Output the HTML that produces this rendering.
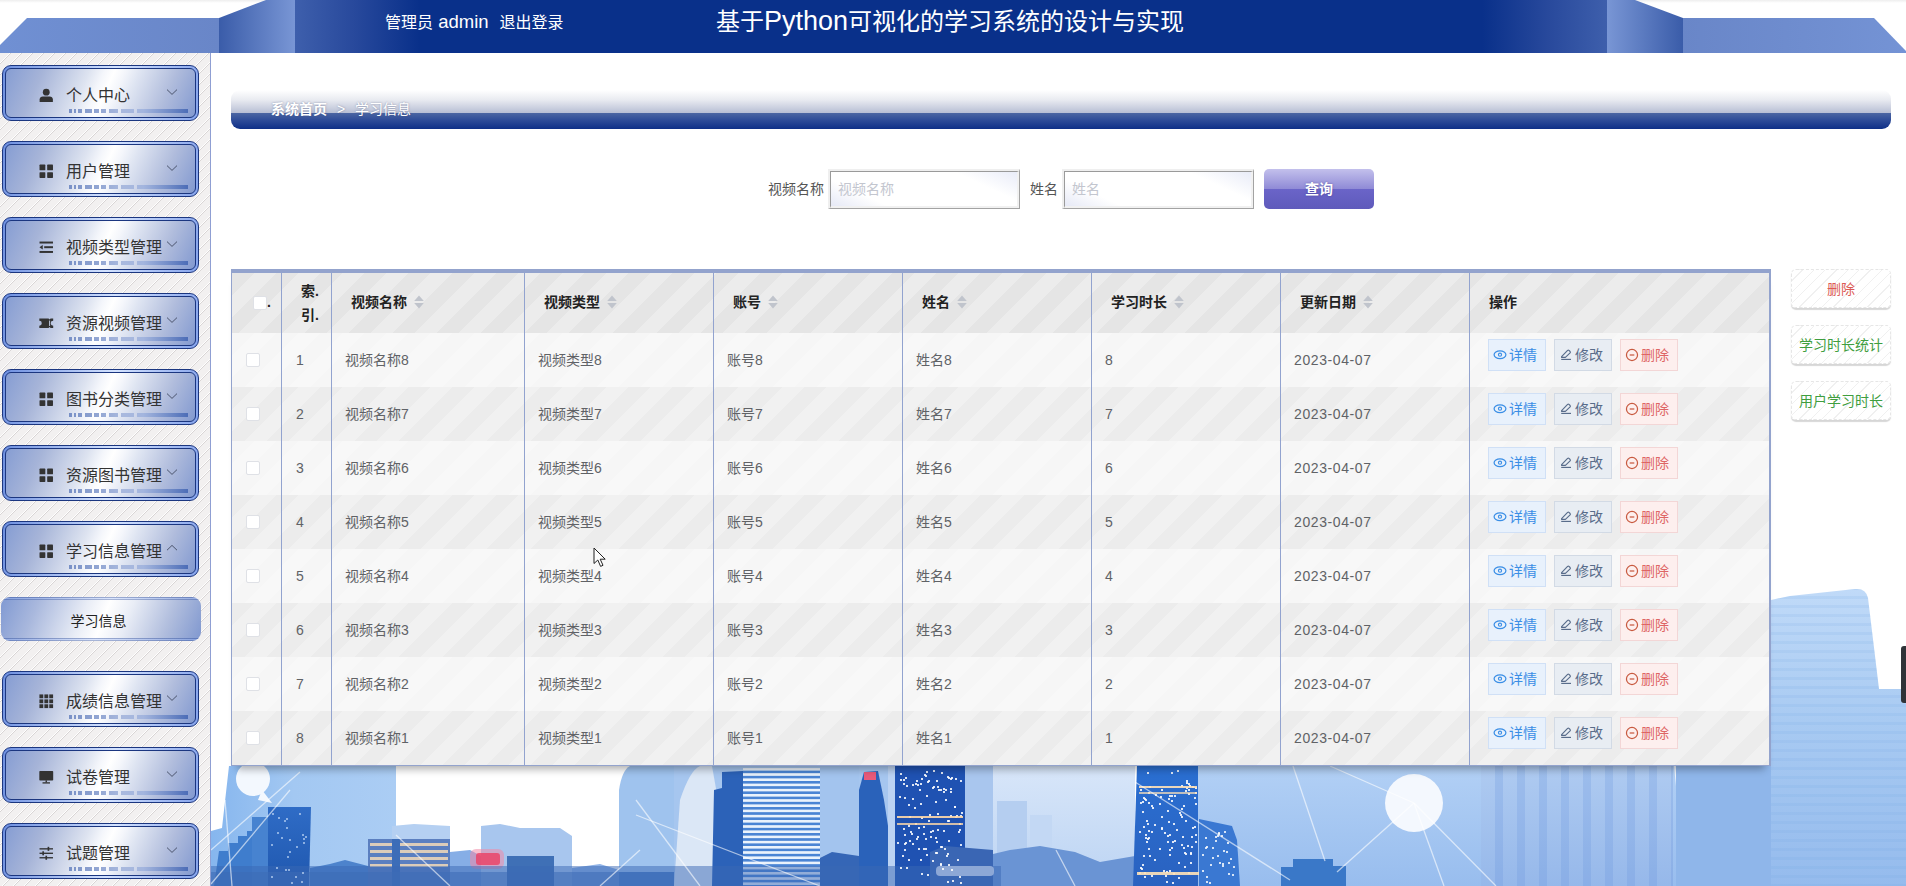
<!DOCTYPE html>
<html lang="zh-CN"><head><meta charset="utf-8"><title>基于Python可视化的学习系统的设计与实现</title>
<style>
*{box-sizing:border-box;margin:0;padding:0}
html,body{width:1906px;height:886px;overflow:hidden;background:#fff}
body:before{content:"";position:absolute;left:0;top:0;width:1906px;height:3px;background:linear-gradient(#eee,#fff)}
body{position:relative;font-family:"Liberation Sans","Noto Sans CJK SC",sans-serif;font-size:14px;color:#333}
.abs{position:absolute}
#hdr{position:absolute;left:0;top:0;width:1906px;height:53px}
#hdr svg{position:absolute;left:0;top:0}
#hdr .user{position:absolute;left:385px;top:9.5px;font-size:16px;line-height:24px;color:#fff;white-space:nowrap}
#hdr .user span{margin-left:11px}
#hdr em{font-style:normal}
#hdr .user em{font-size:18.5px}
#hdr .title em{font-size:27px}
#hdr .title{position:absolute;left:716px;top:3px;font-size:24px;line-height:36px;color:#fff;white-space:nowrap}
#side{position:absolute;left:0;top:53px;width:211px;height:833px;border-right:1px solid #8f9fd3;
 background:repeating-linear-gradient(135deg,#f2f0f0 0,#f2f0f0 6.4px,#fff 6.4px,#fff 7.1px,#d8d4d4 7.1px,#d8d4d4 7.78px)}
.mi{position:absolute;left:2px;width:197px;height:56px;border:1px solid #1b3680;border-radius:9px;padding:2px;
 background:linear-gradient(100deg,#6d8fe0 0%,#d4e3ff 55%,#86a4ec 100%)}
.mi .in{position:relative;width:100%;height:100%;border:1px solid #1b3680;border-radius:6px;
 background:linear-gradient(114deg,#869dd3 0%,#a6b4d8 18%,#dde3f0 40%,#f4f6fb 47%,#ffffff 52%,#f4f6fb 57%,#dfe5f2 64%,#b0bcdc 82%,#8299d0 100%)}
.mi .ic{position:absolute;left:33px;top:19px;width:14.5px;height:14.5px}
.mi .tx{position:absolute;left:60px;top:15px;font-size:16px;line-height:24px;color:#333;white-space:nowrap}
.mi .ar{position:absolute;left:160px;top:17px;width:12px;height:12px}
.mi .ul{position:absolute;left:63px;top:40px;width:120px;height:4px}
.sub{position:absolute;left:1px;top:544px;width:200px;height:44px;border-radius:9px;overflow:hidden;
 background:linear-gradient(112deg,#8099d2 0%,#a9b8dd 18%,#e9edf6 41%,#ffffff 51%,#e9edf6 62%,#b0bddd 82%,#7f97cf 100%);
 text-align:center;font-size:14px;line-height:44px;padding:2px 5px 0 0;color:#222}
.sub:before,.sub:after{content:"";position:absolute;left:0;width:100%;height:3px;
 background:linear-gradient(180deg,rgba(60,90,165,.5) 0,rgba(60,90,165,.5) 1px,rgba(150,180,250,.35) 1px,rgba(150,180,250,.35) 2px,rgba(60,90,165,.45) 2px,rgba(60,90,165,.45) 3px)}
.sub:before{top:0}.sub:after{bottom:0}
#main{position:absolute;left:211px;top:53px;width:1695px;height:833px;overflow:hidden}
#bc{position:absolute;left:231px;top:90px;width:1660px;height:39px;border-radius:9px;
 background:linear-gradient(180deg,#ffffff 0%,#e9ebf1 25%,#b7bed4 59%,#4a64a2 60%,#2d4b98 78%,#0e2f87 100%);
 color:#fff;font-size:14px;line-height:38px;white-space:nowrap;text-shadow:0 0 2px rgba(60,70,110,.55)}
#bc b{position:absolute;left:40px;top:0}
#bc i{position:absolute;left:106px;top:0;font-style:normal}
#bc span{position:absolute;left:124px;top:0}
.lbl{position:absolute;top:169px;height:40px;line-height:40px;font-size:14px;color:#555;white-space:nowrap}
.inp{position:absolute;top:169px;width:192px;height:40px;border-style:solid;border-width:2px 1px 1px 2px;border-color:#efefef #a3a3a3 #a3a3a3 #efefef}
.inp div{width:100%;height:100%;border-style:solid;border-width:1px 2px 2px 1px;border-color:#9a9a9a #f1f1f1 #f1f1f1 #9a9a9a;
 background:linear-gradient(25deg,#e6e9f6 0%,#ffffff 22%,#ffffff 76%,#e9ecf8 100%);
 font-size:14px;line-height:34px;color:#c3c6cf;padding-left:7px}
#qbtn{position:absolute;left:1264px;top:169px;width:110px;height:40px;border-radius:5px;
 background:linear-gradient(180deg,#c3c0ec 0%,#8f8ad6 50%,#6a64c8 51%,#5f5abb 100%);
 color:#fff;font-size:14px;font-weight:bold;text-align:center;line-height:40px;text-shadow:0 0 2px rgba(40,30,110,.5)}
.rb{position:absolute;left:1791px;width:100px;height:39px;border:1px dashed #e6e6e6;border-radius:5px;
 background:repeating-linear-gradient(135deg,#fff 0,#fff 7px,#f0f0f0 7px,#f0f0f0 8px);
 box-shadow:0 2px 1px rgba(0,0,0,.16);text-align:center;font-size:14px;line-height:39px;white-space:nowrap}
#tbl{position:absolute;left:231px;top:269px;width:1540px;height:497px;border-style:solid;border-color:#93a3cd;border-width:4px 2px 1px 1px;
 box-shadow:0 9px 8px -6px rgba(0,0,0,.33);background:#f4f4f4}
.row{position:absolute;left:0;width:1537px;height:54px}
.st{background-image:linear-gradient(-45deg,rgba(255,255,255,.27) 25%,transparent 25%,transparent 50%,rgba(255,255,255,.27) 50%,rgba(255,255,255,.27) 75%,transparent 75%,transparent);background-size:44px 44px}
.hd{top:0;height:60px;background-color:#e5e5e5;font-weight:bold;color:#222}
.r1{background-color:#f6f6f6}
.r2{background-color:#ececec}
.c{position:absolute;top:0;height:100%;white-space:nowrap;font-size:14px;color:#606266}
.row .c{line-height:54px}
.hd .c{line-height:58px;color:#222}
.vl{position:absolute;top:0;width:1px;height:492px;background:#92a3cf}
.cb{position:absolute;width:14px;height:14px;border:1px solid #dfe1e6;border-radius:2px;background:#fff}
.sort{display:inline-block;vertical-align:middle;width:12px;height:16px;margin-left:6px;position:relative;top:-1px}
.btn{position:absolute;top:6px;height:32px;width:58px;border:1px solid;font-size:14px;line-height:30px;white-space:nowrap}
.btn svg{position:absolute;left:4px;top:8px;width:14px;height:14px}
.btn span{position:absolute;left:20px;top:0}
.b1{left:1256px;background:#e8f1fc;border-color:#d0e0f6;color:#3a8ee6}
.b2{left:1322px;background:#e8edf3;border-color:#d2dae5;color:#586c8a}
.b3{left:1388px;background:#fdefee;border-color:#f3d6d6;color:#de6565}
</style></head>
<body>
<svg class="abs" style="left:0;top:0" width="1906" height="886" viewBox="0 0 1906 886">
<defs>
<linearGradient id="cA" x1="0" x2="0" y1="0" y2="1"><stop offset="0" stop-color="#c0daf8"/><stop offset="0.45" stop-color="#a8caf2"/><stop offset="1" stop-color="#95bbed"/></linearGradient>
<linearGradient id="cB" x1="0" x2="0" y1="0" y2="1"><stop offset="0" stop-color="#b2d0f5"/><stop offset="1" stop-color="#98bdee"/></linearGradient>
<linearGradient id="cF" x1="0" x2="0" y1="0" y2="1"><stop offset="0" stop-color="#afcbf1"/><stop offset="1" stop-color="#96b8ea"/></linearGradient>
<linearGradient id="cL" x1="0" x2="1" y1="0" y2="0"><stop offset="0" stop-color="#86b6ee"/><stop offset="0.45" stop-color="#a3c8f2"/><stop offset="1" stop-color="#abcdf4"/></linearGradient>
<linearGradient id="cD" x1="0" x2="0" y1="0" y2="1"><stop offset="0" stop-color="#2f6cc6"/><stop offset="1" stop-color="#1f57ae"/></linearGradient>
<linearGradient id="cE" x1="0" x2="0" y1="0" y2="1"><stop offset="0" stop-color="#2a6fd2"/><stop offset="1" stop-color="#2a62c0"/></linearGradient>
<linearGradient id="cP" x1="0" x2="0" y1="0" y2="1"><stop offset="0" stop-color="#d8e6f9"/><stop offset="1" stop-color="#bcd4f3"/></linearGradient>
<pattern id="pS" x="0" y="768" width="8" height="5.2" patternUnits="userSpaceOnUse"><rect width="8" height="5.2" fill="#4a84d4"/><rect width="8" height="2.6" fill="#eaf2fc"/></pattern>
<pattern id="pH" x="0" y="590" width="8" height="9" patternUnits="userSpaceOnUse"><rect width="8" height="9" fill="none"/><rect y="6" width="8" height="3" fill="#6f9fe0" fill-opacity=".13"/></pattern>
<pattern id="pV" x="1481" y="0" width="22" height="8" patternUnits="userSpaceOnUse"><rect width="22" height="8" fill="none"/><rect x="14" width="8" height="8" fill="#5f8fd8" fill-opacity=".22"/></pattern>
</defs>
<path d="M1771 600L1790 596L1855 589Q1866 588 1868 598L1879 689L1906 689V886H1771Z" fill="url(#cA)"/>
<path d="M1771 600L1790 596L1855 589Q1866 588 1868 598L1879 689L1906 689V886H1771Z" fill="url(#pH)"/>
<rect x="1237" y="766" width="534" height="120" fill="url(#cB)"/>
<rect x="1481" y="766" width="192" height="120" fill="url(#cF)"/>
<rect x="1481" y="766" width="192" height="120" fill="url(#pV)"/>
<path d="M1674 766H1676L1688 886H1686Z" fill="#eef5fd"/>
<rect x="1676" y="766" width="95" height="120" fill="#8fb6ea"/>
<rect x="993" y="766" width="142" height="120" fill="url(#cP)"/>
<rect x="997" y="801" width="30" height="85" fill="#b5cef0"/>
<rect x="1030" y="815" width="22" height="71" fill="#c3d8f4"/>
<path d="M993 886V854L1010 850L1040 846L1075 852L1100 862L1135 856V886Z" fill="#6a94d4"/>
<path d="M1137 766H1198L1199 886H1133Z" fill="url(#cE)"/>
<rect x="1198" y="766" width="42" height="120" fill="url(#cB)"/>
<path d="M1199 819L1232 826L1237 840L1240 886H1199Z" fill="#3a78d2"/>
<circle cx="1414" cy="803" r="29" fill="#f4f8fe"/>
<path d="M1281 867H1293V859H1333V866H1346V886H1281Z" fill="#3a78c8"/>
<path d="M229 766H396V886H211V831L222 828Z" fill="url(#cL)"/>
<circle cx="253" cy="779" r="17" fill="#f3f8fe"/><path d="M262 790L272 803L258 800Z" fill="#f3f8fe"/>
<path d="M268 807H311L309 886H268Z" fill="url(#cD)"/>
<rect x="252" y="817" width="16" height="69" fill="#4783d0"/>
<path d="M219 851H228V843H238V836H247V831H252V886H214Z" fill="#3f7dcd"/>
<path d="M310 868L330 864L345 860L368 866V886H310Z" fill="#4d83cc"/>
<path d="M392 826L414 824L450 826V886H392Z" fill="#b5d0f2"/>
<rect x="368" y="839" width="82" height="47" fill="#5b7fc0"/>
<rect x="370" y="843" width="78" height="3" fill="#f3d9b8" fill-opacity=".85"/>
<rect x="370" y="850" width="78" height="3" fill="#f3d9b8" fill-opacity=".85"/>
<rect x="370" y="857" width="78" height="3" fill="#f3d9b8" fill-opacity=".85"/>
<rect x="370" y="864" width="78" height="3" fill="#f3d9b8" fill-opacity=".85"/>
<rect x="392" y="839" width="8" height="47" fill="#3c6db8"/>
<path d="M450 852L470 850L481 856V886H450Z" fill="#86aee6"/>
<path d="M481 826L500 824L520 828L560 828L572 836V886H481Z" fill="#a8c6ee"/>
<rect x="507" y="856" width="47" height="30" fill="#3f70b6"/>
<rect x="470" y="849" width="34" height="20" rx="6" fill="#f08aa8" fill-opacity=".55"/><rect x="476" y="853" width="24" height="12" rx="3" fill="#ea4468" fill-opacity=".85"/>
<path d="M572 868L600 864L619 870V886H572Z" fill="#8fb2e6"/>
<rect x="211" y="872" width="408" height="14" fill="#3f70b8" fill-opacity=".55"/>
<rect x="630" y="766" width="363" height="120" fill="#a6c6ef"/>
<path d="M619 790Q622 770 630 766H674V886H619Z" fill="#9fc3ee"/>
<rect x="619" y="872" width="55" height="14" fill="#4b7cc4"/>
<path d="M674 886L680 800Q690 770 700 766H712L718 800V886Z" fill="#dbe7f6"/>
<path d="M714 790L722 788V772L743 771V886H712Z" fill="#2c62b8"/>
<rect x="743" y="768" width="77" height="118" fill="url(#pS)"/>
<rect x="820" y="766" width="39" height="120" fill="#a3c4ee"/>
<path d="M820 858L832 852L859 856V886H820Z" fill="#3566b6"/>
<path d="M859 790L864 772L878 771L884 800L888 826V886H859Z" fill="#2a62ba"/>
<rect x="864" y="772" width="12" height="8" fill="#e85a7a"/>
<rect x="888" y="766" width="7" height="120" fill="#bcd3f3"/>
<rect x="895" y="766" width="70" height="120" fill="#1f52b2"/>
<rect x="965" y="766" width="28" height="120" fill="#a9c6ee"/>
<path d="M930 886V852L945 846L993 850V886Z" fill="#3a66b4"/>
<rect x="936" y="866" width="58" height="10" rx="4" fill="#f4f6ff" fill-opacity=".9"/>
<rect x="211" y="866" width="790" height="20" fill="#3a68b4" fill-opacity=".5"/>
<rect x="938" y="789" width="2" height="2" fill="#ffffff" fill-opacity=".85"/>
<rect x="947" y="853" width="2" height="2" fill="#ffffff" fill-opacity=".85"/>
<rect x="903" y="779" width="2" height="2" fill="#ffffff" fill-opacity=".85"/>
<rect x="909" y="816" width="2" height="2" fill="#ffffff" fill-opacity=".85"/>
<rect x="904" y="834" width="2" height="2" fill="#ffffff" fill-opacity=".85"/>
<rect x="924" y="774" width="2" height="2" fill="#ffffff" fill-opacity=".85"/>
<rect x="908" y="825" width="2" height="2" fill="#ffffff" fill-opacity=".85"/>
<rect x="950" y="778" width="2" height="2" fill="#ffffff" fill-opacity=".85"/>
<rect x="927" y="781" width="2" height="2" fill="#ffffff" fill-opacity=".85"/>
<rect x="951" y="777" width="2" height="2" fill="#ffffff" fill-opacity=".85"/>
<rect x="912" y="798" width="2" height="2" fill="#ffffff" fill-opacity=".85"/>
<rect x="904" y="843" width="2" height="2" fill="#ffffff" fill-opacity=".85"/>
<rect x="947" y="776" width="2" height="2" fill="#ffffff" fill-opacity=".85"/>
<rect x="925" y="775" width="2" height="2" fill="#ffffff" fill-opacity=".85"/>
<rect x="914" y="807" width="2" height="2" fill="#ffffff" fill-opacity=".85"/>
<rect x="950" y="788" width="2" height="2" fill="#ffffff" fill-opacity=".85"/>
<rect x="912" y="843" width="2" height="2" fill="#ffffff" fill-opacity=".85"/>
<rect x="936" y="841" width="2" height="2" fill="#ffffff" fill-opacity=".85"/>
<rect x="920" y="783" width="2" height="2" fill="#ffffff" fill-opacity=".85"/>
<rect x="921" y="817" width="2" height="2" fill="#ffffff" fill-opacity=".85"/>
<rect x="909" y="840" width="2" height="2" fill="#ffffff" fill-opacity=".85"/>
<rect x="905" y="842" width="2" height="2" fill="#ffffff" fill-opacity=".85"/>
<rect x="904" y="849" width="2" height="2" fill="#ffffff" fill-opacity=".85"/>
<rect x="923" y="833" width="2" height="2" fill="#ffffff" fill-opacity=".85"/>
<rect x="951" y="869" width="2" height="2" fill="#ffffff" fill-opacity=".85"/>
<rect x="937" y="829" width="2" height="2" fill="#ffffff" fill-opacity=".85"/>
<rect x="955" y="816" width="2" height="2" fill="#ffffff" fill-opacity=".85"/>
<rect x="935" y="801" width="2" height="2" fill="#ffffff" fill-opacity=".85"/>
<rect x="920" y="859" width="2" height="2" fill="#ffffff" fill-opacity=".85"/>
<rect x="928" y="780" width="2" height="2" fill="#ffffff" fill-opacity=".85"/>
<rect x="935" y="837" width="2" height="2" fill="#ffffff" fill-opacity=".85"/>
<rect x="960" y="882" width="2" height="2" fill="#ffffff" fill-opacity=".85"/>
<rect x="940" y="863" width="2" height="2" fill="#ffffff" fill-opacity=".85"/>
<rect x="954" y="806" width="2" height="2" fill="#ffffff" fill-opacity=".85"/>
<rect x="906" y="785" width="2" height="2" fill="#ffffff" fill-opacity=".85"/>
<rect x="950" y="791" width="2" height="2" fill="#ffffff" fill-opacity=".85"/>
<rect x="940" y="789" width="2" height="2" fill="#ffffff" fill-opacity=".85"/>
<rect x="959" y="823" width="2" height="2" fill="#ffffff" fill-opacity=".85"/>
<rect x="902" y="855" width="2" height="2" fill="#ffffff" fill-opacity=".85"/>
<rect x="906" y="867" width="2" height="2" fill="#ffffff" fill-opacity=".85"/>
<rect x="937" y="813" width="2" height="2" fill="#ffffff" fill-opacity=".85"/>
<rect x="941" y="846" width="2" height="2" fill="#ffffff" fill-opacity=".85"/>
<rect x="960" y="844" width="2" height="2" fill="#ffffff" fill-opacity=".85"/>
<rect x="955" y="778" width="2" height="2" fill="#ffffff" fill-opacity=".85"/>
<rect x="908" y="804" width="2" height="2" fill="#ffffff" fill-opacity=".85"/>
<rect x="957" y="859" width="2" height="2" fill="#ffffff" fill-opacity=".85"/>
<rect x="905" y="777" width="2" height="2" fill="#ffffff" fill-opacity=".85"/>
<rect x="936" y="852" width="2" height="2" fill="#ffffff" fill-opacity=".85"/>
<rect x="954" y="806" width="2" height="2" fill="#ffffff" fill-opacity=".85"/>
<rect x="946" y="855" width="2" height="2" fill="#ffffff" fill-opacity=".85"/>
<rect x="941" y="772" width="2" height="2" fill="#ffffff" fill-opacity=".85"/>
<rect x="956" y="815" width="2" height="2" fill="#ffffff" fill-opacity=".85"/>
<rect x="918" y="848" width="2" height="2" fill="#ffffff" fill-opacity=".85"/>
<rect x="911" y="833" width="2" height="2" fill="#ffffff" fill-opacity=".85"/>
<rect x="904" y="797" width="2" height="2" fill="#ffffff" fill-opacity=".85"/>
<rect x="933" y="786" width="2" height="2" fill="#ffffff" fill-opacity=".85"/>
<rect x="928" y="820" width="2" height="2" fill="#ffffff" fill-opacity=".85"/>
<rect x="947" y="881" width="2" height="2" fill="#ffffff" fill-opacity=".85"/>
<rect x="960" y="780" width="2" height="2" fill="#ffffff" fill-opacity=".85"/>
<rect x="918" y="827" width="2" height="2" fill="#ffffff" fill-opacity=".85"/>
<rect x="948" y="840" width="2" height="2" fill="#ffffff" fill-opacity=".85"/>
<rect x="932" y="787" width="2" height="2" fill="#ffffff" fill-opacity=".85"/>
<rect x="952" y="880" width="2" height="2" fill="#ffffff" fill-opacity=".85"/>
<rect x="932" y="860" width="2" height="2" fill="#ffffff" fill-opacity=".85"/>
<rect x="950" y="815" width="2" height="2" fill="#ffffff" fill-opacity=".85"/>
<rect x="945" y="799" width="2" height="2" fill="#ffffff" fill-opacity=".85"/>
<rect x="916" y="780" width="2" height="2" fill="#ffffff" fill-opacity=".85"/>
<rect x="919" y="789" width="2" height="2" fill="#ffffff" fill-opacity=".85"/>
<rect x="926" y="854" width="2" height="2" fill="#ffffff" fill-opacity=".85"/>
<rect x="926" y="771" width="2" height="2" fill="#ffffff" fill-opacity=".85"/>
<rect x="959" y="876" width="2" height="2" fill="#ffffff" fill-opacity=".85"/>
<rect x="920" y="803" width="2" height="2" fill="#ffffff" fill-opacity=".85"/>
<rect x="933" y="770" width="2" height="2" fill="#ffffff" fill-opacity=".85"/>
<rect x="915" y="823" width="2" height="2" fill="#ffffff" fill-opacity=".85"/>
<rect x="944" y="848" width="2" height="2" fill="#ffffff" fill-opacity=".85"/>
<rect x="937" y="786" width="2" height="2" fill="#ffffff" fill-opacity=".85"/>
<rect x="903" y="828" width="2" height="2" fill="#ffffff" fill-opacity=".85"/>
<rect x="947" y="820" width="2" height="2" fill="#ffffff" fill-opacity=".85"/>
<rect x="948" y="820" width="2" height="2" fill="#ffffff" fill-opacity=".85"/>
<rect x="910" y="831" width="2" height="2" fill="#ffffff" fill-opacity=".85"/>
<rect x="948" y="777" width="2" height="2" fill="#ffffff" fill-opacity=".85"/>
<rect x="921" y="778" width="2" height="2" fill="#ffffff" fill-opacity=".85"/>
<rect x="923" y="826" width="2" height="2" fill="#ffffff" fill-opacity=".85"/>
<rect x="917" y="784" width="2" height="2" fill="#ffffff" fill-opacity=".85"/>
<rect x="940" y="846" width="2" height="2" fill="#ffffff" fill-opacity=".85"/>
<rect x="903" y="783" width="2" height="2" fill="#ffffff" fill-opacity=".85"/>
<rect x="897" y="842" width="2" height="2" fill="#ffffff" fill-opacity=".85"/>
<rect x="916" y="838" width="2" height="2" fill="#ffffff" fill-opacity=".85"/>
<rect x="909" y="816" width="2" height="2" fill="#ffffff" fill-opacity=".85"/>
<rect x="900" y="779" width="2" height="2" fill="#ffffff" fill-opacity=".85"/>
<rect x="923" y="848" width="2" height="2" fill="#ffffff" fill-opacity=".85"/>
<rect x="945" y="789" width="2" height="2" fill="#ffffff" fill-opacity=".85"/>
<rect x="929" y="814" width="2" height="2" fill="#ffffff" fill-opacity=".85"/>
<rect x="943" y="830" width="2" height="2" fill="#ffffff" fill-opacity=".85"/>
<rect x="912" y="784" width="2" height="2" fill="#ffffff" fill-opacity=".85"/>
<rect x="959" y="829" width="2" height="2" fill="#ffffff" fill-opacity=".85"/>
<rect x="958" y="831" width="2" height="2" fill="#ffffff" fill-opacity=".85"/>
<rect x="936" y="780" width="2" height="2" fill="#ffffff" fill-opacity=".85"/>
<rect x="915" y="783" width="2" height="2" fill="#ffffff" fill-opacity=".85"/>
<rect x="940" y="864" width="2" height="2" fill="#ffffff" fill-opacity=".85"/>
<rect x="930" y="831" width="2" height="2" fill="#ffffff" fill-opacity=".85"/>
<rect x="917" y="836" width="2" height="2" fill="#ffffff" fill-opacity=".85"/>
<rect x="899" y="796" width="2" height="2" fill="#ffffff" fill-opacity=".85"/>
<rect x="943" y="788" width="2" height="2" fill="#ffffff" fill-opacity=".85"/>
<rect x="900" y="867" width="2" height="2" fill="#ffffff" fill-opacity=".85"/>
<rect x="935" y="852" width="2" height="2" fill="#ffffff" fill-opacity=".85"/>
<rect x="908" y="859" width="2" height="2" fill="#ffffff" fill-opacity=".85"/>
<rect x="930" y="836" width="2" height="2" fill="#ffffff" fill-opacity=".85"/>
<rect x="943" y="791" width="2" height="2" fill="#ffffff" fill-opacity=".85"/>
<rect x="942" y="868" width="2" height="2" fill="#ffffff" fill-opacity=".85"/>
<rect x="925" y="838" width="2" height="2" fill="#ffffff" fill-opacity=".85"/>
<rect x="961" y="812" width="2" height="2" fill="#ffffff" fill-opacity=".85"/>
<rect x="925" y="848" width="2" height="2" fill="#ffffff" fill-opacity=".85"/>
<rect x="921" y="873" width="2" height="2" fill="#ffffff" fill-opacity=".85"/>
<rect x="927" y="874" width="2" height="2" fill="#ffffff" fill-opacity=".85"/>
<rect x="948" y="864" width="2" height="2" fill="#ffffff" fill-opacity=".85"/>
<rect x="926" y="795" width="2" height="2" fill="#ffffff" fill-opacity=".85"/>
<rect x="960" y="815" width="2" height="2" fill="#ffffff" fill-opacity=".85"/>
<rect x="900" y="773" width="2" height="2" fill="#ffffff" fill-opacity=".85"/>
<rect x="932" y="830" width="2" height="2" fill="#ffffff" fill-opacity=".85"/>
<rect x="1155" y="794" width="2" height="2" fill="#ffffff" fill-opacity=".85"/>
<rect x="1183" y="847" width="2" height="2" fill="#ffffff" fill-opacity=".85"/>
<rect x="1161" y="827" width="2" height="2" fill="#ffffff" fill-opacity=".85"/>
<rect x="1190" y="862" width="2" height="2" fill="#ffffff" fill-opacity=".85"/>
<rect x="1161" y="816" width="2" height="2" fill="#ffffff" fill-opacity=".85"/>
<rect x="1144" y="798" width="2" height="2" fill="#ffffff" fill-opacity=".85"/>
<rect x="1145" y="799" width="2" height="2" fill="#ffffff" fill-opacity=".85"/>
<rect x="1169" y="795" width="2" height="2" fill="#ffffff" fill-opacity=".85"/>
<rect x="1160" y="796" width="2" height="2" fill="#ffffff" fill-opacity=".85"/>
<rect x="1169" y="849" width="2" height="2" fill="#ffffff" fill-opacity=".85"/>
<rect x="1178" y="877" width="2" height="2" fill="#ffffff" fill-opacity=".85"/>
<rect x="1139" y="831" width="2" height="2" fill="#ffffff" fill-opacity=".85"/>
<rect x="1180" y="814" width="2" height="2" fill="#ffffff" fill-opacity=".85"/>
<rect x="1190" y="852" width="2" height="2" fill="#ffffff" fill-opacity=".85"/>
<rect x="1144" y="876" width="2" height="2" fill="#ffffff" fill-opacity=".85"/>
<rect x="1181" y="785" width="2" height="2" fill="#ffffff" fill-opacity=".85"/>
<rect x="1163" y="870" width="2" height="2" fill="#ffffff" fill-opacity=".85"/>
<rect x="1184" y="866" width="2" height="2" fill="#ffffff" fill-opacity=".85"/>
<rect x="1151" y="831" width="2" height="2" fill="#ffffff" fill-opacity=".85"/>
<rect x="1195" y="792" width="2" height="2" fill="#ffffff" fill-opacity=".85"/>
<rect x="1166" y="871" width="2" height="2" fill="#ffffff" fill-opacity=".85"/>
<rect x="1179" y="812" width="2" height="2" fill="#ffffff" fill-opacity=".85"/>
<rect x="1144" y="872" width="2" height="2" fill="#ffffff" fill-opacity=".85"/>
<rect x="1185" y="820" width="2" height="2" fill="#ffffff" fill-opacity=".85"/>
<rect x="1168" y="821" width="2" height="2" fill="#ffffff" fill-opacity=".85"/>
<rect x="1186" y="780" width="2" height="2" fill="#ffffff" fill-opacity=".85"/>
<rect x="1185" y="790" width="2" height="2" fill="#ffffff" fill-opacity=".85"/>
<rect x="1149" y="786" width="2" height="2" fill="#ffffff" fill-opacity=".85"/>
<rect x="1140" y="789" width="2" height="2" fill="#ffffff" fill-opacity=".85"/>
<rect x="1176" y="829" width="2" height="2" fill="#ffffff" fill-opacity=".85"/>
<rect x="1190" y="853" width="2" height="2" fill="#ffffff" fill-opacity=".85"/>
<rect x="1148" y="848" width="2" height="2" fill="#ffffff" fill-opacity=".85"/>
<rect x="1191" y="846" width="2" height="2" fill="#ffffff" fill-opacity=".85"/>
<rect x="1169" y="854" width="2" height="2" fill="#ffffff" fill-opacity=".85"/>
<rect x="1161" y="789" width="2" height="2" fill="#ffffff" fill-opacity=".85"/>
<rect x="1174" y="840" width="2" height="2" fill="#ffffff" fill-opacity=".85"/>
<rect x="1147" y="772" width="2" height="2" fill="#ffffff" fill-opacity=".85"/>
<rect x="1139" y="872" width="2" height="2" fill="#ffffff" fill-opacity=".85"/>
<rect x="1185" y="853" width="2" height="2" fill="#ffffff" fill-opacity=".85"/>
<rect x="1145" y="837" width="2" height="2" fill="#ffffff" fill-opacity=".85"/>
<rect x="1186" y="787" width="2" height="2" fill="#ffffff" fill-opacity=".85"/>
<rect x="1166" y="881" width="2" height="2" fill="#ffffff" fill-opacity=".85"/>
<rect x="1151" y="875" width="2" height="2" fill="#ffffff" fill-opacity=".85"/>
<rect x="1194" y="797" width="2" height="2" fill="#ffffff" fill-opacity=".85"/>
<rect x="1140" y="802" width="2" height="2" fill="#ffffff" fill-opacity=".85"/>
<rect x="1152" y="807" width="2" height="2" fill="#ffffff" fill-opacity=".85"/>
<rect x="1171" y="800" width="2" height="2" fill="#ffffff" fill-opacity=".85"/>
<rect x="1187" y="845" width="2" height="2" fill="#ffffff" fill-opacity=".85"/>
<rect x="1159" y="803" width="2" height="2" fill="#ffffff" fill-opacity=".85"/>
<rect x="1173" y="823" width="2" height="2" fill="#ffffff" fill-opacity=".85"/>
<rect x="1192" y="786" width="2" height="2" fill="#ffffff" fill-opacity=".85"/>
<rect x="1142" y="864" width="2" height="2" fill="#ffffff" fill-opacity=".85"/>
<rect x="1161" y="828" width="2" height="2" fill="#ffffff" fill-opacity=".85"/>
<rect x="1181" y="844" width="2" height="2" fill="#ffffff" fill-opacity=".85"/>
<rect x="1191" y="836" width="2" height="2" fill="#ffffff" fill-opacity=".85"/>
<rect x="1165" y="875" width="2" height="2" fill="#ffffff" fill-opacity=".85"/>
<rect x="1195" y="834" width="2" height="2" fill="#ffffff" fill-opacity=".85"/>
<rect x="1147" y="838" width="2" height="2" fill="#ffffff" fill-opacity=".85"/>
<rect x="1148" y="837" width="2" height="2" fill="#ffffff" fill-opacity=".85"/>
<rect x="1171" y="772" width="2" height="2" fill="#ffffff" fill-opacity=".85"/>
<rect x="1194" y="826" width="2" height="2" fill="#ffffff" fill-opacity=".85"/>
<rect x="1188" y="793" width="2" height="2" fill="#ffffff" fill-opacity=".85"/>
<rect x="1177" y="770" width="2" height="2" fill="#ffffff" fill-opacity=".85"/>
<rect x="1188" y="872" width="2" height="2" fill="#ffffff" fill-opacity=".85"/>
<rect x="1148" y="792" width="2" height="2" fill="#ffffff" fill-opacity=".85"/>
<rect x="1148" y="830" width="2" height="2" fill="#ffffff" fill-opacity=".85"/>
<rect x="1178" y="862" width="2" height="2" fill="#ffffff" fill-opacity=".85"/>
<rect x="1146" y="841" width="2" height="2" fill="#ffffff" fill-opacity=".85"/>
<rect x="1142" y="811" width="2" height="2" fill="#ffffff" fill-opacity=".85"/>
<rect x="1182" y="836" width="2" height="2" fill="#ffffff" fill-opacity=".85"/>
<rect x="1172" y="841" width="2" height="2" fill="#ffffff" fill-opacity=".85"/>
<rect x="1169" y="870" width="2" height="2" fill="#ffffff" fill-opacity=".85"/>
<rect x="1188" y="783" width="2" height="2" fill="#ffffff" fill-opacity=".85"/>
<rect x="1195" y="841" width="2" height="2" fill="#ffffff" fill-opacity=".85"/>
<rect x="1142" y="801" width="2" height="2" fill="#ffffff" fill-opacity=".85"/>
<rect x="1151" y="805" width="2" height="2" fill="#ffffff" fill-opacity=".85"/>
<rect x="1141" y="868" width="2" height="2" fill="#ffffff" fill-opacity=".85"/>
<rect x="1145" y="834" width="2" height="2" fill="#ffffff" fill-opacity=".85"/>
<rect x="1167" y="841" width="2" height="2" fill="#ffffff" fill-opacity=".85"/>
<rect x="1140" y="867" width="2" height="2" fill="#ffffff" fill-opacity=".85"/>
<rect x="1143" y="826" width="2" height="2" fill="#ffffff" fill-opacity=".85"/>
<rect x="1159" y="848" width="2" height="2" fill="#ffffff" fill-opacity=".85"/>
<rect x="1171" y="847" width="2" height="2" fill="#ffffff" fill-opacity=".85"/>
<rect x="1171" y="795" width="2" height="2" fill="#ffffff" fill-opacity=".85"/>
<rect x="1183" y="805" width="2" height="2" fill="#ffffff" fill-opacity=".85"/>
<rect x="1167" y="835" width="2" height="2" fill="#ffffff" fill-opacity=".85"/>
<rect x="1173" y="873" width="2" height="2" fill="#ffffff" fill-opacity=".85"/>
<rect x="1169" y="834" width="2" height="2" fill="#ffffff" fill-opacity=".85"/>
<rect x="1154" y="859" width="2" height="2" fill="#ffffff" fill-opacity=".85"/>
<rect x="1172" y="882" width="2" height="2" fill="#ffffff" fill-opacity=".85"/>
<rect x="1195" y="803" width="2" height="2" fill="#ffffff" fill-opacity=".85"/>
<rect x="1174" y="795" width="2" height="2" fill="#ffffff" fill-opacity=".85"/>
<rect x="1192" y="827" width="2" height="2" fill="#ffffff" fill-opacity=".85"/>
<rect x="1147" y="823" width="2" height="2" fill="#ffffff" fill-opacity=".85"/>
<rect x="1146" y="820" width="2" height="2" fill="#ffffff" fill-opacity=".85"/>
<rect x="1167" y="810" width="2" height="2" fill="#ffffff" fill-opacity=".85"/>
<rect x="1143" y="855" width="2" height="2" fill="#ffffff" fill-opacity=".85"/>
<rect x="1154" y="824" width="2" height="2" fill="#ffffff" fill-opacity=".85"/>
<rect x="1143" y="797" width="2" height="2" fill="#ffffff" fill-opacity=".85"/>
<rect x="1181" y="808" width="2" height="2" fill="#ffffff" fill-opacity=".85"/>
<rect x="1189" y="785" width="2" height="2" fill="#ffffff" fill-opacity=".85"/>
<rect x="1188" y="789" width="2" height="2" fill="#ffffff" fill-opacity=".85"/>
<rect x="1184" y="852" width="2" height="2" fill="#ffffff" fill-opacity=".85"/>
<rect x="1181" y="816" width="2" height="2" fill="#ffffff" fill-opacity=".85"/>
<rect x="1148" y="802" width="2" height="2" fill="#ffffff" fill-opacity=".85"/>
<rect x="1195" y="787" width="2" height="2" fill="#ffffff" fill-opacity=".85"/>
<rect x="1168" y="798" width="2" height="2" fill="#ffffff" fill-opacity=".85"/>
<rect x="1186" y="782" width="2" height="2" fill="#ffffff" fill-opacity=".85"/>
<rect x="1164" y="832" width="2" height="2" fill="#ffffff" fill-opacity=".85"/>
<rect x="1149" y="855" width="2" height="2" fill="#ffffff" fill-opacity=".85"/>
<rect x="1215" y="840" width="2" height="2" fill="#ffffff" fill-opacity=".8"/>
<rect x="1228" y="862" width="2" height="2" fill="#ffffff" fill-opacity=".8"/>
<rect x="1226" y="851" width="2" height="2" fill="#ffffff" fill-opacity=".8"/>
<rect x="1227" y="842" width="2" height="2" fill="#ffffff" fill-opacity=".8"/>
<rect x="1223" y="850" width="2" height="2" fill="#ffffff" fill-opacity=".8"/>
<rect x="1206" y="876" width="2" height="2" fill="#ffffff" fill-opacity=".8"/>
<rect x="1224" y="831" width="2" height="2" fill="#ffffff" fill-opacity=".8"/>
<rect x="1222" y="865" width="2" height="2" fill="#ffffff" fill-opacity=".8"/>
<rect x="1230" y="858" width="2" height="2" fill="#ffffff" fill-opacity=".8"/>
<rect x="1202" y="854" width="2" height="2" fill="#ffffff" fill-opacity=".8"/>
<rect x="1222" y="863" width="2" height="2" fill="#ffffff" fill-opacity=".8"/>
<rect x="1219" y="862" width="2" height="2" fill="#ffffff" fill-opacity=".8"/>
<rect x="1205" y="837" width="2" height="2" fill="#ffffff" fill-opacity=".8"/>
<rect x="1215" y="836" width="2" height="2" fill="#ffffff" fill-opacity=".8"/>
<rect x="1206" y="846" width="2" height="2" fill="#ffffff" fill-opacity=".8"/>
<rect x="1218" y="832" width="2" height="2" fill="#ffffff" fill-opacity=".8"/>
<rect x="1212" y="847" width="2" height="2" fill="#ffffff" fill-opacity=".8"/>
<rect x="1209" y="882" width="2" height="2" fill="#ffffff" fill-opacity=".8"/>
<rect x="1228" y="873" width="2" height="2" fill="#ffffff" fill-opacity=".8"/>
<rect x="1217" y="855" width="2" height="2" fill="#ffffff" fill-opacity=".8"/>
<rect x="1210" y="864" width="2" height="2" fill="#ffffff" fill-opacity=".8"/>
<rect x="1233" y="866" width="2" height="2" fill="#ffffff" fill-opacity=".8"/>
<rect x="1232" y="874" width="2" height="2" fill="#ffffff" fill-opacity=".8"/>
<rect x="1221" y="835" width="2" height="2" fill="#ffffff" fill-opacity=".8"/>
<rect x="1218" y="833" width="2" height="2" fill="#ffffff" fill-opacity=".8"/>
<rect x="1212" y="857" width="2" height="2" fill="#ffffff" fill-opacity=".8"/>
<rect x="1205" y="847" width="2" height="2" fill="#ffffff" fill-opacity=".8"/>
<rect x="1202" y="870" width="2" height="2" fill="#ffffff" fill-opacity=".8"/>
<rect x="1206" y="881" width="2" height="2" fill="#ffffff" fill-opacity=".8"/>
<rect x="1217" y="835" width="2" height="2" fill="#ffffff" fill-opacity=".8"/>
<rect x="284" y="820" width="2" height="2" fill="#cfe2fb" fill-opacity=".6"/>
<rect x="286" y="827" width="2" height="2" fill="#cfe2fb" fill-opacity=".6"/>
<rect x="299" y="813" width="2" height="2" fill="#cfe2fb" fill-opacity=".6"/>
<rect x="291" y="882" width="2" height="2" fill="#cfe2fb" fill-opacity=".6"/>
<rect x="296" y="846" width="2" height="2" fill="#cfe2fb" fill-opacity=".6"/>
<rect x="278" y="817" width="2" height="2" fill="#cfe2fb" fill-opacity=".6"/>
<rect x="303" y="842" width="2" height="2" fill="#cfe2fb" fill-opacity=".6"/>
<rect x="277" y="832" width="2" height="2" fill="#cfe2fb" fill-opacity=".6"/>
<rect x="286" y="818" width="2" height="2" fill="#cfe2fb" fill-opacity=".6"/>
<rect x="281" y="837" width="2" height="2" fill="#cfe2fb" fill-opacity=".6"/>
<rect x="289" y="851" width="2" height="2" fill="#cfe2fb" fill-opacity=".6"/>
<rect x="303" y="838" width="2" height="2" fill="#cfe2fb" fill-opacity=".6"/>
<rect x="288" y="869" width="2" height="2" fill="#cfe2fb" fill-opacity=".6"/>
<rect x="302" y="834" width="2" height="2" fill="#cfe2fb" fill-opacity=".6"/>
<rect x="287" y="856" width="2" height="2" fill="#cfe2fb" fill-opacity=".6"/>
<rect x="271" y="844" width="2" height="2" fill="#cfe2fb" fill-opacity=".6"/>
<rect x="272" y="813" width="2" height="2" fill="#cfe2fb" fill-opacity=".6"/>
<rect x="271" y="876" width="2" height="2" fill="#cfe2fb" fill-opacity=".6"/>
<rect x="305" y="836" width="2" height="2" fill="#cfe2fb" fill-opacity=".6"/>
<rect x="302" y="872" width="2" height="2" fill="#cfe2fb" fill-opacity=".6"/>
<rect x="285" y="869" width="2" height="2" fill="#cfe2fb" fill-opacity=".6"/>
<rect x="276" y="867" width="2" height="2" fill="#cfe2fb" fill-opacity=".6"/>
<rect x="301" y="881" width="2" height="2" fill="#cfe2fb" fill-opacity=".6"/>
<rect x="295" y="876" width="2" height="2" fill="#cfe2fb" fill-opacity=".6"/>
<rect x="289" y="839" width="2" height="2" fill="#cfe2fb" fill-opacity=".6"/>
<rect x="897" y="816" width="66" height="2" fill="#ffd9a8" fill-opacity=".9"/><rect x="897" y="823" width="66" height="2" fill="#ffd9a8" fill-opacity=".8"/>
<rect x="1139" y="786" width="58" height="2" fill="#ffe2b8" fill-opacity=".9"/><rect x="1139" y="792" width="58" height="2" fill="#ffe2b8" fill-opacity=".7"/><rect x="1137" y="872" width="62" height="3" fill="#ffe2b8" fill-opacity=".9"/>
<line x1="211" y1="850" x2="300" y2="772" stroke="#fff" stroke-opacity=".6" stroke-width="1.3"/>
<line x1="211" y1="884" x2="290" y2="790" stroke="#fff" stroke-opacity=".6" stroke-width="1.3"/>
<line x1="232" y1="886" x2="225" y2="800" stroke="#fff" stroke-opacity=".6" stroke-width="1.3"/>
<line x1="396" y1="835" x2="450" y2="886" stroke="#fff" stroke-opacity=".6" stroke-width="1.3"/>
<line x1="600" y1="886" x2="640" y2="850" stroke="#fff" stroke-opacity=".6" stroke-width="1.3"/>
<line x1="636" y1="800" x2="700" y2="886" stroke="#fff" stroke-opacity=".6" stroke-width="1.3"/>
<line x1="636" y1="815" x2="820" y2="886" stroke="#fff" stroke-opacity=".6" stroke-width="1.3"/>
<line x1="1135" y1="782" x2="1290" y2="880" stroke="#fff" stroke-opacity=".6" stroke-width="1.3"/>
<line x1="1056" y1="850" x2="1075" y2="886" stroke="#fff" stroke-opacity=".6" stroke-width="1.3"/>
<line x1="1414" y1="803" x2="1337" y2="872" stroke="#fff" stroke-opacity=".6" stroke-width="1.3"/>
<line x1="1414" y1="803" x2="1330" y2="766" stroke="#fff" stroke-opacity=".6" stroke-width="1.3"/>
<line x1="1414" y1="803" x2="1496" y2="886" stroke="#fff" stroke-opacity=".6" stroke-width="1.3"/>
<line x1="1414" y1="803" x2="1444" y2="886" stroke="#fff" stroke-opacity=".6" stroke-width="1.3"/>
<line x1="1293" y1="766" x2="1325" y2="861" stroke="#fff" stroke-opacity=".6" stroke-width="1.3"/>
</svg>
<div id="hdr"><svg width="1906" height="53" viewBox="0 0 1906 53">
<defs>
<linearGradient id="gm" x1="0" x2="1" y1="0" y2="0"><stop offset="0" stop-color="#3e5fac"/><stop offset="0.045" stop-color="#28499c"/><stop offset="0.095" stop-color="#09308a"/><stop offset="0.905" stop-color="#09308a"/><stop offset="0.955" stop-color="#28499c"/><stop offset="1" stop-color="#3e5fac"/></linearGradient>
<linearGradient id="gw" x1="0" x2="1" y1="0" y2="0"><stop offset="0" stop-color="#3a5ca9"/><stop offset="1" stop-color="#7996d5"/></linearGradient>
<linearGradient id="gw2" x1="0" x2="1" y1="0" y2="0"><stop offset="0" stop-color="#7996d5"/><stop offset="1" stop-color="#3a5ca9"/></linearGradient>
<linearGradient id="gl" x1="0" x2="1" y1="0" y2="0"><stop offset="0" stop-color="#7090d3"/><stop offset="1" stop-color="#6986c8"/></linearGradient>
<linearGradient id="gl2" x1="0" x2="1" y1="0" y2="0"><stop offset="0" stop-color="#6986c8"/><stop offset="1" stop-color="#7493d5"/></linearGradient>
</defs>
<polygon points="0,45 27,18 219,18 219,53 0,53" fill="url(#gl)"/>
<polygon points="219,18 266,0 295,0 295,53 219,53" fill="url(#gw)"/>
<rect x="295" y="0" width="1312" height="53" fill="url(#gm)"/>
<polygon points="1607,0 1635,0 1683,18 1683,53 1607,53" fill="url(#gw2)"/>
<polygon points="1683,18 1874,18 1906,51 1906,53 1683,53" fill="url(#gl2)"/>
</svg>
<div class="user">管理员<em> admin</em><span>退出登录</span></div>
<div class="title">基于<em>Python</em>可视化的学习系统的设计与实现</div>
</div>
<div id="side">
<div class="mi" style="top:12px"><div class="in"><svg class="ic" viewBox="0 0 14 14"><circle cx="7" cy="4" r="3.3" fill="#333"/><path d="M0.6 13.6V11.2C0.6 9.3 2 8.3 3.6 8.3H10.4C12 8.3 13.4 9.3 13.4 11.2V13.6Z" fill="#333"/></svg><div class="tx">个人中心</div><svg class="ar" viewBox="0 0 12 12"><path d="M1 3.6L6 8.4L11 3.6" fill="none" stroke="#3a4258" stroke-width=".85"/></svg><svg class="ul" viewBox="0 0 120 4"><defs><linearGradient id="ug" gradientUnits="userSpaceOnUse" x1="0" x2="120" y1="0" y2="0"><stop offset="0" stop-color="#7890c6"/><stop offset="0.45" stop-color="#a9b9de"/><stop offset="0.62" stop-color="#a3b5de"/><stop offset="1" stop-color="#4a6bb6"/></linearGradient></defs><g id="ulb" fill="url(#ug)"><rect x="0" y="0" width="3" height="4"/><rect x="5" y="0" width="2" height="4"/><rect x="9" y="0" width="4" height="4"/><rect x="16" y="0" width="7" height="4"/><rect x="25" y="0" width="5" height="4"/><rect x="32" y="0" width="5" height="4"/><rect x="40" y="0" width="9" height="4"/><rect x="52" y="0" width="13" height="4"/><rect x="68" y="0" width="51" height="4"/></g></svg></div></div>
<div class="mi" style="top:88px"><div class="in"><svg class="ic" viewBox="0 0 14 14"><rect x="0.5" y="0.5" width="5.6" height="5.6" rx=".6" fill="#333"/><rect x="7.9" y="0.5" width="5.6" height="5.6" rx=".6" fill="#333"/><rect x="0.5" y="7.9" width="5.6" height="5.6" rx=".6" fill="#333"/><rect x="7.9" y="7.9" width="5.6" height="5.6" rx=".6" fill="#333"/></svg><div class="tx">用户管理</div><svg class="ar" viewBox="0 0 12 12"><path d="M1 3.6L6 8.4L11 3.6" fill="none" stroke="#3a4258" stroke-width=".85"/></svg><svg class="ul" viewBox="0 0 120 4"><use href="#ulb"/></svg></div></div>
<div class="mi" style="top:164px"><div class="in"><svg class="ic" viewBox="0 0 14 14"><rect x="0.5" y="1.5" width="13" height="1.9" fill="#333"/><rect x="5" y="6" width="8.5" height="1.9" fill="#333"/><rect x="0.5" y="10.6" width="13" height="1.9" fill="#333"/><path d="M0.4 7L3.6 4.8V9.2Z" fill="#333"/></svg><div class="tx">视频类型管理</div><svg class="ar" viewBox="0 0 12 12"><path d="M1 3.6L6 8.4L11 3.6" fill="none" stroke="#3a4258" stroke-width=".85"/></svg><svg class="ul" viewBox="0 0 120 4"><use href="#ulb"/></svg></div></div>
<div class="mi" style="top:240px"><div class="in"><svg class="ic" viewBox="0 0 14 14"><path d="M0.3 2.3H9.2L10.2 3.4L11.2 2.3H13.7V4.6A2.4 2.4 0 0 0 13.7 9.4V11.7H11.2L10.2 10.6L9.2 11.7H0.3V9.4A2.4 2.4 0 0 0 0.3 4.6Z" fill="#333"/><rect x="9.8" y="4.4" width=".9" height="5.2" fill="#c9d3ea"/></svg><div class="tx">资源视频管理</div><svg class="ar" viewBox="0 0 12 12"><path d="M1 3.6L6 8.4L11 3.6" fill="none" stroke="#3a4258" stroke-width=".85"/></svg><svg class="ul" viewBox="0 0 120 4"><use href="#ulb"/></svg></div></div>
<div class="mi" style="top:316px"><div class="in"><svg class="ic" viewBox="0 0 14 14"><rect x="0.5" y="0.5" width="5.6" height="5.6" rx=".6" fill="#333"/><rect x="7.9" y="0.5" width="5.6" height="5.6" rx=".6" fill="#333"/><rect x="0.5" y="7.9" width="5.6" height="5.6" rx=".6" fill="#333"/><rect x="7.9" y="7.9" width="5.6" height="5.6" rx=".6" fill="#333"/></svg><div class="tx">图书分类管理</div><svg class="ar" viewBox="0 0 12 12"><path d="M1 3.6L6 8.4L11 3.6" fill="none" stroke="#3a4258" stroke-width=".85"/></svg><svg class="ul" viewBox="0 0 120 4"><use href="#ulb"/></svg></div></div>
<div class="mi" style="top:392px"><div class="in"><svg class="ic" viewBox="0 0 14 14"><rect x="0.5" y="0.5" width="5.6" height="5.6" rx=".6" fill="#333"/><rect x="7.9" y="0.5" width="5.6" height="5.6" rx=".6" fill="#333"/><rect x="0.5" y="7.9" width="5.6" height="5.6" rx=".6" fill="#333"/><rect x="7.9" y="7.9" width="5.6" height="5.6" rx=".6" fill="#333"/></svg><div class="tx">资源图书管理</div><svg class="ar" viewBox="0 0 12 12"><path d="M1 3.6L6 8.4L11 3.6" fill="none" stroke="#3a4258" stroke-width=".85"/></svg><svg class="ul" viewBox="0 0 120 4"><use href="#ulb"/></svg></div></div>
<div class="mi" style="top:468px"><div class="in"><svg class="ic" viewBox="0 0 14 14"><rect x="0.5" y="0.5" width="5.6" height="5.6" rx=".6" fill="#333"/><rect x="7.9" y="0.5" width="5.6" height="5.6" rx=".6" fill="#333"/><rect x="0.5" y="7.9" width="5.6" height="5.6" rx=".6" fill="#333"/><rect x="7.9" y="7.9" width="5.6" height="5.6" rx=".6" fill="#333"/></svg><div class="tx">学习信息管理</div><svg class="ar" viewBox="0 0 12 12"><path d="M1 8.2L6 3.4L11 8.2" fill="none" stroke="#3a4258" stroke-width=".85"/></svg><svg class="ul" viewBox="0 0 120 4"><use href="#ulb"/></svg></div></div>
<div class="mi" style="top:618px"><div class="in"><svg class="ic" viewBox="0 0 14 14"><rect x="0.4" y="0.4" width="3.7" height="3.7" fill="#333"/><rect x="0.4" y="5.2" width="3.7" height="3.7" fill="#333"/><rect x="0.4" y="9.9" width="3.7" height="3.7" fill="#333"/><rect x="5.2" y="0.4" width="3.7" height="3.7" fill="#333"/><rect x="5.2" y="5.2" width="3.7" height="3.7" fill="#333"/><rect x="5.2" y="9.9" width="3.7" height="3.7" fill="#333"/><rect x="9.9" y="0.4" width="3.7" height="3.7" fill="#333"/><rect x="9.9" y="5.2" width="3.7" height="3.7" fill="#333"/><rect x="9.9" y="9.9" width="3.7" height="3.7" fill="#333"/></svg><div class="tx">成绩信息管理</div><svg class="ar" viewBox="0 0 12 12"><path d="M1 3.6L6 8.4L11 3.6" fill="none" stroke="#3a4258" stroke-width=".85"/></svg><svg class="ul" viewBox="0 0 120 4"><use href="#ulb"/></svg></div></div>
<div class="mi" style="top:694px"><div class="in"><svg class="ic" viewBox="0 0 14 14"><rect x="0.3" y="1" width="13.4" height="9.2" rx=".7" fill="#333"/><rect x="6.3" y="10" width="1.4" height="2" fill="#333"/><rect x="3.4" y="11.8" width="7.2" height="1.3" fill="#333"/></svg><div class="tx">试卷管理</div><svg class="ar" viewBox="0 0 12 12"><path d="M1 3.6L6 8.4L11 3.6" fill="none" stroke="#3a4258" stroke-width=".85"/></svg><svg class="ul" viewBox="0 0 120 4"><use href="#ulb"/></svg></div></div>
<div class="mi" style="top:770px"><div class="in"><svg class="ic" viewBox="0 0 14 14"><g fill="#333"><rect x="0.5" y="2.1" width="13" height="1.3"/><rect x="0.5" y="6.4" width="13" height="1.3"/><rect x="0.5" y="10.7" width="13" height="1.3"/><rect x="8.3" y="0.8" width="1.6" height="3.9"/><rect x="3.2" y="5.1" width="1.6" height="3.9"/><rect x="6.2" y="9.4" width="1.6" height="3.9"/></g></svg><div class="tx">试题管理</div><svg class="ar" viewBox="0 0 12 12"><path d="M1 3.6L6 8.4L11 3.6" fill="none" stroke="#3a4258" stroke-width=".85"/></svg><svg class="ul" viewBox="0 0 120 4"><use href="#ulb"/></svg></div></div>
<div class="sub">学习信息</div>
</div>
<div id="bc"><b>系统首页</b><i>&gt;</i><span>学习信息</span></div>
<div class="lbl" style="left:768px">视频名称</div><div class="inp" style="left:828px"><div>视频名称</div></div>
<div class="lbl" style="left:1030px">姓名</div><div class="inp" style="left:1062px"><div>姓名</div></div>
<div id="qbtn">查询</div>
<div class="rb" style="top:269px;color:#dc5a55">删除</div>
<div class="rb" style="top:325px;color:#3f9e3f">学习时长统计</div>
<div class="rb" style="top:381px;color:#3f9e3f">用户学习时长</div>
<div id="tbl">
<div class="row hd st"><div class="cb" style="left:21px;top:23px"></div><div class="c" style="left:35px">.</div><div class="c" style="left:69px;line-height:24px;top:6px">索.<br>引.</div><div class="c" style="left:119px">视频名称<svg class="sort" viewBox="0 0 12 16"><path d="M6 1.6L10.8 7H1.2Z" fill="#c0c4cc"/><path d="M6 14.4L10.8 9H1.2Z" fill="#c0c4cc"/></svg></div><div class="c" style="left:312px">视频类型<svg class="sort" viewBox="0 0 12 16"><path d="M6 1.6L10.8 7H1.2Z" fill="#c0c4cc"/><path d="M6 14.4L10.8 9H1.2Z" fill="#c0c4cc"/></svg></div><div class="c" style="left:501px">账号<svg class="sort" viewBox="0 0 12 16"><path d="M6 1.6L10.8 7H1.2Z" fill="#c0c4cc"/><path d="M6 14.4L10.8 9H1.2Z" fill="#c0c4cc"/></svg></div><div class="c" style="left:690px">姓名<svg class="sort" viewBox="0 0 12 16"><path d="M6 1.6L10.8 7H1.2Z" fill="#c0c4cc"/><path d="M6 14.4L10.8 9H1.2Z" fill="#c0c4cc"/></svg></div><div class="c" style="left:879px">学习时长<svg class="sort" viewBox="0 0 12 16"><path d="M6 1.6L10.8 7H1.2Z" fill="#c0c4cc"/><path d="M6 14.4L10.8 9H1.2Z" fill="#c0c4cc"/></svg></div><div class="c" style="left:1068px">更新日期<svg class="sort" viewBox="0 0 12 16"><path d="M6 1.6L10.8 7H1.2Z" fill="#c0c4cc"/><path d="M6 14.4L10.8 9H1.2Z" fill="#c0c4cc"/></svg></div><div class="c" style="left:1257px">操作</div></div>
<div class="row st r1" style="top:60px"><div class="cb" style="left:14px;top:20px"></div><div class="c" style="left:64px">1</div><div class="c" style="left:113px">视频名称8</div><div class="c" style="left:306px">视频类型8</div><div class="c" style="left:495px">账号8</div><div class="c" style="left:684px">姓名8</div><div class="c" style="left:873px">8</div><div class="c" style="left:1062px"><span style="letter-spacing:.6px">2023-04-07</span></div><div class="btn b1"><svg viewBox="0 0 14 14"><ellipse cx="7" cy="6.7" rx="5.9" ry="3.9" fill="none" stroke="currentColor" stroke-width="1.25"/><circle cx="7" cy="6.7" r="1.55" fill="none" stroke="currentColor" stroke-width="1.15"/></svg><span>详情</span></div><div class="btn b2"><svg viewBox="0 0 14 14"><path d="M2.6 9.4V8.6L8.6 2.4Q9.3 1.8 10 2.4L11.1 3.5Q11.7 4.2 11.1 4.9L6.4 9.4Z" fill="none" stroke="currentColor" stroke-width="1.15" stroke-linejoin="round"/><path d="M2.2 11.4H12" stroke="currentColor" stroke-width="1.15"/></svg><span>修改</span></div><div class="btn b3"><svg viewBox="0 0 14 14"><circle cx="7" cy="7" r="5.55" fill="none" stroke="#c85a40" stroke-width="1.25"/><path d="M4.7 7H9.3" stroke="#c85a40" stroke-width="1.25"/></svg><span>删除</span></div></div>
<div class="row st r2" style="top:114px"><div class="cb" style="left:14px;top:20px"></div><div class="c" style="left:64px">2</div><div class="c" style="left:113px">视频名称7</div><div class="c" style="left:306px">视频类型7</div><div class="c" style="left:495px">账号7</div><div class="c" style="left:684px">姓名7</div><div class="c" style="left:873px">7</div><div class="c" style="left:1062px"><span style="letter-spacing:.6px">2023-04-07</span></div><div class="btn b1"><svg viewBox="0 0 14 14"><ellipse cx="7" cy="6.7" rx="5.9" ry="3.9" fill="none" stroke="currentColor" stroke-width="1.25"/><circle cx="7" cy="6.7" r="1.55" fill="none" stroke="currentColor" stroke-width="1.15"/></svg><span>详情</span></div><div class="btn b2"><svg viewBox="0 0 14 14"><path d="M2.6 9.4V8.6L8.6 2.4Q9.3 1.8 10 2.4L11.1 3.5Q11.7 4.2 11.1 4.9L6.4 9.4Z" fill="none" stroke="currentColor" stroke-width="1.15" stroke-linejoin="round"/><path d="M2.2 11.4H12" stroke="currentColor" stroke-width="1.15"/></svg><span>修改</span></div><div class="btn b3"><svg viewBox="0 0 14 14"><circle cx="7" cy="7" r="5.55" fill="none" stroke="#c85a40" stroke-width="1.25"/><path d="M4.7 7H9.3" stroke="#c85a40" stroke-width="1.25"/></svg><span>删除</span></div></div>
<div class="row st r1" style="top:168px"><div class="cb" style="left:14px;top:20px"></div><div class="c" style="left:64px">3</div><div class="c" style="left:113px">视频名称6</div><div class="c" style="left:306px">视频类型6</div><div class="c" style="left:495px">账号6</div><div class="c" style="left:684px">姓名6</div><div class="c" style="left:873px">6</div><div class="c" style="left:1062px"><span style="letter-spacing:.6px">2023-04-07</span></div><div class="btn b1"><svg viewBox="0 0 14 14"><ellipse cx="7" cy="6.7" rx="5.9" ry="3.9" fill="none" stroke="currentColor" stroke-width="1.25"/><circle cx="7" cy="6.7" r="1.55" fill="none" stroke="currentColor" stroke-width="1.15"/></svg><span>详情</span></div><div class="btn b2"><svg viewBox="0 0 14 14"><path d="M2.6 9.4V8.6L8.6 2.4Q9.3 1.8 10 2.4L11.1 3.5Q11.7 4.2 11.1 4.9L6.4 9.4Z" fill="none" stroke="currentColor" stroke-width="1.15" stroke-linejoin="round"/><path d="M2.2 11.4H12" stroke="currentColor" stroke-width="1.15"/></svg><span>修改</span></div><div class="btn b3"><svg viewBox="0 0 14 14"><circle cx="7" cy="7" r="5.55" fill="none" stroke="#c85a40" stroke-width="1.25"/><path d="M4.7 7H9.3" stroke="#c85a40" stroke-width="1.25"/></svg><span>删除</span></div></div>
<div class="row st r2" style="top:222px"><div class="cb" style="left:14px;top:20px"></div><div class="c" style="left:64px">4</div><div class="c" style="left:113px">视频名称5</div><div class="c" style="left:306px">视频类型5</div><div class="c" style="left:495px">账号5</div><div class="c" style="left:684px">姓名5</div><div class="c" style="left:873px">5</div><div class="c" style="left:1062px"><span style="letter-spacing:.6px">2023-04-07</span></div><div class="btn b1"><svg viewBox="0 0 14 14"><ellipse cx="7" cy="6.7" rx="5.9" ry="3.9" fill="none" stroke="currentColor" stroke-width="1.25"/><circle cx="7" cy="6.7" r="1.55" fill="none" stroke="currentColor" stroke-width="1.15"/></svg><span>详情</span></div><div class="btn b2"><svg viewBox="0 0 14 14"><path d="M2.6 9.4V8.6L8.6 2.4Q9.3 1.8 10 2.4L11.1 3.5Q11.7 4.2 11.1 4.9L6.4 9.4Z" fill="none" stroke="currentColor" stroke-width="1.15" stroke-linejoin="round"/><path d="M2.2 11.4H12" stroke="currentColor" stroke-width="1.15"/></svg><span>修改</span></div><div class="btn b3"><svg viewBox="0 0 14 14"><circle cx="7" cy="7" r="5.55" fill="none" stroke="#c85a40" stroke-width="1.25"/><path d="M4.7 7H9.3" stroke="#c85a40" stroke-width="1.25"/></svg><span>删除</span></div></div>
<div class="row st r1" style="top:276px"><div class="cb" style="left:14px;top:20px"></div><div class="c" style="left:64px">5</div><div class="c" style="left:113px">视频名称4</div><div class="c" style="left:306px">视频类型4</div><div class="c" style="left:495px">账号4</div><div class="c" style="left:684px">姓名4</div><div class="c" style="left:873px">4</div><div class="c" style="left:1062px"><span style="letter-spacing:.6px">2023-04-07</span></div><div class="btn b1"><svg viewBox="0 0 14 14"><ellipse cx="7" cy="6.7" rx="5.9" ry="3.9" fill="none" stroke="currentColor" stroke-width="1.25"/><circle cx="7" cy="6.7" r="1.55" fill="none" stroke="currentColor" stroke-width="1.15"/></svg><span>详情</span></div><div class="btn b2"><svg viewBox="0 0 14 14"><path d="M2.6 9.4V8.6L8.6 2.4Q9.3 1.8 10 2.4L11.1 3.5Q11.7 4.2 11.1 4.9L6.4 9.4Z" fill="none" stroke="currentColor" stroke-width="1.15" stroke-linejoin="round"/><path d="M2.2 11.4H12" stroke="currentColor" stroke-width="1.15"/></svg><span>修改</span></div><div class="btn b3"><svg viewBox="0 0 14 14"><circle cx="7" cy="7" r="5.55" fill="none" stroke="#c85a40" stroke-width="1.25"/><path d="M4.7 7H9.3" stroke="#c85a40" stroke-width="1.25"/></svg><span>删除</span></div></div>
<div class="row st r2" style="top:330px"><div class="cb" style="left:14px;top:20px"></div><div class="c" style="left:64px">6</div><div class="c" style="left:113px">视频名称3</div><div class="c" style="left:306px">视频类型3</div><div class="c" style="left:495px">账号3</div><div class="c" style="left:684px">姓名3</div><div class="c" style="left:873px">3</div><div class="c" style="left:1062px"><span style="letter-spacing:.6px">2023-04-07</span></div><div class="btn b1"><svg viewBox="0 0 14 14"><ellipse cx="7" cy="6.7" rx="5.9" ry="3.9" fill="none" stroke="currentColor" stroke-width="1.25"/><circle cx="7" cy="6.7" r="1.55" fill="none" stroke="currentColor" stroke-width="1.15"/></svg><span>详情</span></div><div class="btn b2"><svg viewBox="0 0 14 14"><path d="M2.6 9.4V8.6L8.6 2.4Q9.3 1.8 10 2.4L11.1 3.5Q11.7 4.2 11.1 4.9L6.4 9.4Z" fill="none" stroke="currentColor" stroke-width="1.15" stroke-linejoin="round"/><path d="M2.2 11.4H12" stroke="currentColor" stroke-width="1.15"/></svg><span>修改</span></div><div class="btn b3"><svg viewBox="0 0 14 14"><circle cx="7" cy="7" r="5.55" fill="none" stroke="#c85a40" stroke-width="1.25"/><path d="M4.7 7H9.3" stroke="#c85a40" stroke-width="1.25"/></svg><span>删除</span></div></div>
<div class="row st r1" style="top:384px"><div class="cb" style="left:14px;top:20px"></div><div class="c" style="left:64px">7</div><div class="c" style="left:113px">视频名称2</div><div class="c" style="left:306px">视频类型2</div><div class="c" style="left:495px">账号2</div><div class="c" style="left:684px">姓名2</div><div class="c" style="left:873px">2</div><div class="c" style="left:1062px"><span style="letter-spacing:.6px">2023-04-07</span></div><div class="btn b1"><svg viewBox="0 0 14 14"><ellipse cx="7" cy="6.7" rx="5.9" ry="3.9" fill="none" stroke="currentColor" stroke-width="1.25"/><circle cx="7" cy="6.7" r="1.55" fill="none" stroke="currentColor" stroke-width="1.15"/></svg><span>详情</span></div><div class="btn b2"><svg viewBox="0 0 14 14"><path d="M2.6 9.4V8.6L8.6 2.4Q9.3 1.8 10 2.4L11.1 3.5Q11.7 4.2 11.1 4.9L6.4 9.4Z" fill="none" stroke="currentColor" stroke-width="1.15" stroke-linejoin="round"/><path d="M2.2 11.4H12" stroke="currentColor" stroke-width="1.15"/></svg><span>修改</span></div><div class="btn b3"><svg viewBox="0 0 14 14"><circle cx="7" cy="7" r="5.55" fill="none" stroke="#c85a40" stroke-width="1.25"/><path d="M4.7 7H9.3" stroke="#c85a40" stroke-width="1.25"/></svg><span>删除</span></div></div>
<div class="row st r2" style="top:438px"><div class="cb" style="left:14px;top:20px"></div><div class="c" style="left:64px">8</div><div class="c" style="left:113px">视频名称1</div><div class="c" style="left:306px">视频类型1</div><div class="c" style="left:495px">账号1</div><div class="c" style="left:684px">姓名1</div><div class="c" style="left:873px">1</div><div class="c" style="left:1062px"><span style="letter-spacing:.6px">2023-04-07</span></div><div class="btn b1"><svg viewBox="0 0 14 14"><ellipse cx="7" cy="6.7" rx="5.9" ry="3.9" fill="none" stroke="currentColor" stroke-width="1.25"/><circle cx="7" cy="6.7" r="1.55" fill="none" stroke="currentColor" stroke-width="1.15"/></svg><span>详情</span></div><div class="btn b2"><svg viewBox="0 0 14 14"><path d="M2.6 9.4V8.6L8.6 2.4Q9.3 1.8 10 2.4L11.1 3.5Q11.7 4.2 11.1 4.9L6.4 9.4Z" fill="none" stroke="currentColor" stroke-width="1.15" stroke-linejoin="round"/><path d="M2.2 11.4H12" stroke="currentColor" stroke-width="1.15"/></svg><span>修改</span></div><div class="btn b3"><svg viewBox="0 0 14 14"><circle cx="7" cy="7" r="5.55" fill="none" stroke="#c85a40" stroke-width="1.25"/><path d="M4.7 7H9.3" stroke="#c85a40" stroke-width="1.25"/></svg><span>删除</span></div></div>
<div class="vl" style="left:49px"></div><div class="vl" style="left:99px"></div><div class="vl" style="left:292px"></div><div class="vl" style="left:481px"></div><div class="vl" style="left:670px"></div><div class="vl" style="left:859px"></div><div class="vl" style="left:1048px"></div><div class="vl" style="left:1237px"></div>
</div>
<div class="abs" style="left:1901px;top:646px;width:6px;height:57px;background:#2f3338;border-radius:3px 0 0 3px"></div>
<svg class="abs" style="left:593px;top:547px" width="14" height="21" viewBox="0 0 14 21"><path d="M1 1V16.5L4.8 13L7.6 19.4L10 18.3L7.2 12.2H12.2Z" fill="#fff" stroke="#222" stroke-width="1"/></svg>
</body></html>
